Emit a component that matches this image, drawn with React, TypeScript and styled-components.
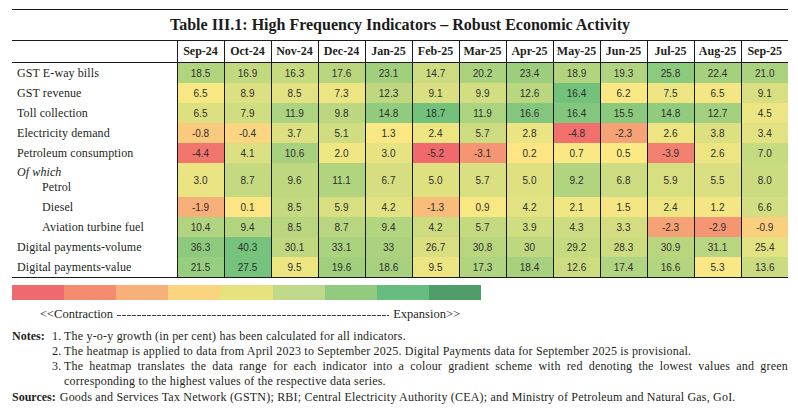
import React from 'react';
import styled, { createGlobalStyle } from 'styled-components';

const GlobalStyle = createGlobalStyle`
  html, body {
    margin: 0;
    padding: 0;
    background: #ffffff;
  }
  body {
    font-family: 'Liberation Serif', 'Times New Roman', serif;
    color: #231f20;
  }
`;

// Excel style red - yellow - green scale
const RED = [240, 105, 108];
const YELLOW = [252, 233, 131];
const GREEN = [99, 190, 123];

const heat = (t: number) => {
  const target = t < 0 ? RED : GREEN;
  const k = Math.min(1, Math.abs(t));
  const rgb = YELLOW.map((v, i) => Math.round(v + (target[i] - v) * k));
  return `rgb(${rgb.join(',')})`;
};

const Page = styled.div`
  width: 776px;
  padding: 9px 10px 0 12px;
`;

const TitleBar = styled.div`
  height: 30px;
  border-top: 1px solid #1a1a1a;
  display: flex;
  align-items: center;
  justify-content: center;
  font-size: 16px;
  font-weight: 700;
  color: #1a1a1a;
`;

const Table = styled.table`
  width: 776px;
  border-collapse: collapse;
  table-layout: fixed;
  border-bottom: 1px solid #1a1a1a;
`;

const HeadRow = styled.tr`
  border-top: 1px solid #1a1a1a;
  border-bottom: 1px solid #1a1a1a;
`;

const HeadCell = styled.th`
  height: 21px;
  padding: 0;
  font-size: 12px;
  font-weight: 700;
  color: #231f20;
  text-align: center;
  border-left: 1px solid #1a1a1a;
`;

const BlankHead = styled.th`
  padding: 0;
`;

const LabelCell = styled.td<{ $tall?: boolean }>`
  height: ${({ $tall }) => ($tall ? '34px' : '20px')};
  padding: 0 0 0 5px;
  font-size: 12px;
  letter-spacing: 0.1px;
  line-height: 15px;
  white-space: nowrap;
  vertical-align: middle;
`;

const Lead = styled.div`
  font-style: italic;
`;

const Indent = styled.div`
  padding-left: 25px;
`;

const ValueCell = styled.td<{ $t: number }>`
  padding: 0;
  text-align: center;
  vertical-align: middle;
  font-family: 'Liberation Sans', Arial, sans-serif;
  font-size: 10px;
  color: #2f2f2f;
  background: ${({ $t }) => heat($t)};
  border-left: 1px solid #1a1a1a;
`;

const Legend = styled.div`
  width: 469px;
  margin-top: 7px;
`;

const LegendBar = styled.div`
  display: grid;
  grid-template-columns: repeat(9, 1fr);
  height: 15px;
`;

const Swatch = styled.div<{ $color: string }>`
  background: ${({ $color }) => $color};
`;

const LegendText = styled.div`
  display: flex;
  align-items: center;
  gap: 4px;
  margin: 7px 0 8px;
  padding: 0 21px 0 28px;
  font-size: 12.5px;
  line-height: 14px;
  color: #231f20;
`;

const DashLine = styled.div`
  flex: 1;
  height: 1px;
  margin-top: 2px;
  background: repeating-linear-gradient(to right, #444 0 4px, transparent 4px 5px);
`;

const NoteBlock = styled.div`
  display: flex;
  font-size: 12px;
  letter-spacing: 0.2px;
  line-height: 15px;
  color: #231f20;
`;

const NoteHead = styled.div`
  width: 40px;
  font-weight: 700;
  letter-spacing: 0;
  flex-shrink: 0;
`;

const NoteList = styled.div`
  flex: 1;
`;

const NoteItem = styled.div`
  display: flex;
`;

const NoteNum = styled.span`
  width: 12px;
  flex-shrink: 0;
`;

const NoteText = styled.span`
  flex: 1;
  text-align: justify;
`;

const Sources = styled.div`
  margin-top: 1px;
  font-size: 12px;
  letter-spacing: 0.2px;
  line-height: 15px;
  color: #231f20;

  b {
    letter-spacing: 0;
    margin-right: 4px;
  }
`;

const months = [
  'Sep-24', 'Oct-24', 'Nov-24', 'Dec-24', 'Jan-25', 'Feb-25', 'Mar-25',
  'Apr-25', 'May-25', 'Jun-25', 'Jul-25', 'Aug-25', 'Sep-25',
];

interface Row {
  label: string;
  lead?: string;
  indent?: boolean;
  values: string[];
  heat: number[];
}

const rows: Row[] = [
  {
    label: 'GST E-way bills',
    values: ['18.5', '16.9', '16.3', '17.6', '23.1', '14.7', '20.2', '23.4', '18.9', '19.3', '25.8', '22.4', '21.0'],
    heat: [0.49, 0.37, 0.35, 0.44, 0.6, 0.3, 0.53, 0.62, 0.48, 0.5, 0.73, 0.57, 0.53],
  },
  {
    label: 'GST revenue',
    values: ['6.5', '8.9', '8.5', '7.3', '12.3', '9.1', '9.9', '12.6', '16.4', '6.2', '7.5', '6.5', '9.1'],
    heat: [0.03, 0.2, 0.17, 0.1, 0.4, 0.22, 0.27, 0.43, 0.9, 0.02, 0.1, 0.05, 0.24],
  },
  {
    label: 'Toll collection',
    values: ['6.5', '7.9', '11.9', '9.8', '14.8', '18.7', '11.9', '16.6', '16.4', '15.5', '14.8', '12.7', '4.5'],
    heat: [0.2, 0.28, 0.52, 0.42, 0.7, 0.9, 0.52, 0.8, 0.8, 0.74, 0.7, 0.58, 0.1],
  },
  {
    label: 'Electricity demand',
    values: ['-0.8', '-0.4', '3.7', '5.1', '1.3', '2.4', '5.7', '2.8', '-4.8', '-2.3', '2.6', '3.8', '3.4'],
    heat: [-0.25, -0.15, 0.2, 0.28, 0.02, 0.1, 0.3, 0.12, -0.95, -0.55, 0.1, 0.2, 0.17],
  },
  {
    label: 'Petroleum consumption',
    values: ['-4.4', '4.1', '10.6', '2.0', '3.0', '-5.2', '-3.1', '0.2', '0.7', '0.5', '-3.9', '2.6', '7.0'],
    heat: [-0.9, 0.2, 0.55, 0.08, 0.13, -1, -0.65, -0.03, 0.02, 0, -0.82, 0.1, 0.35],
  },
  {
    label: 'Petrol',
    lead: 'Of which',
    indent: true,
    values: ['3.0', '8.7', '9.6', '11.1', '6.7', '5.0', '5.7', '5.0', '9.2', '6.8', '5.9', '5.5', '8.0'],
    heat: [0.12, 0.36, 0.4, 0.48, 0.25, 0.19, 0.22, 0.19, 0.5, 0.3, 0.24, 0.22, 0.33],
  },
  {
    label: 'Diesel',
    indent: true,
    values: ['-1.9', '0.1', '8.5', '5.9', '4.2', '-1.3', '0.9', '4.2', '2.1', '1.5', '2.4', '1.2', '6.6'],
    heat: [-0.45, -0.02, 0.36, 0.24, 0.17, -0.35, 0.03, 0.17, 0.08, 0.06, 0.09, 0.05, 0.27],
  },
  {
    label: 'Aviation turbine fuel',
    indent: true,
    values: ['10.4', '9.4', '8.5', '8.7', '9.4', '4.2', '5.7', '3.9', '4.3', '3.3', '-2.3', '-2.9', '-0.9'],
    heat: [0.5, 0.47, 0.44, 0.45, 0.47, 0.3, 0.36, 0.28, 0.3, 0.26, -0.55, -0.65, -0.2],
  },
  {
    label: 'Digital payments-volume',
    values: ['36.3', '40.3', '30.1', '33.1', '33', '26.7', '30.8', '30', '29.2', '28.3', '30.9', '31.1', '25.4'],
    heat: [0.72, 0.88, 0.4, 0.53, 0.53, 0.23, 0.44, 0.4, 0.35, 0.3, 0.44, 0.45, 0.17],
  },
  {
    label: 'Digital payments-value',
    values: ['21.5', '27.5', '9.5', '19.6', '18.6', '9.5', '17.3', '18.4', '12.6', '17.4', '16.6', '5.3', '13.6'],
    heat: [0.66, 0.88, 0.1, 0.6, 0.55, 0.1, 0.5, 0.55, 0.3, 0.5, 0.47, 0.02, 0.33],
  },
];

const legendColors = [
  '#ef6a6e', '#f48d70', '#f8b07a', '#fad47f', '#e6e37f',
  '#bfd98a', '#93cb7e', '#66bd7f', '#4f9e69',
];

const notes = [
  'The y-o-y growth (in per cent) has been calculated for all indicators.',
  'The heatmap is applied to data from April 2023 to September 2025. Digital Payments data for September 2025 is provisional.',
  'The heatmap translates the data range for each indicator into a colour gradient scheme with red denoting the lowest values and green corresponding to the highest values of the respective data series.',
];

export default function App() {
  return (
    <>
      <GlobalStyle />
      <Page>
        <TitleBar>Table III.1: High Frequency Indicators – Robust Economic Activity</TitleBar>
        <Table>
          <colgroup>
            <col style={{ width: 165 }} />
            {months.map(m => (
              <col key={m} />
            ))}
          </colgroup>
          <thead>
            <HeadRow>
              <BlankHead />
              {months.map(m => (
                <HeadCell key={m}>{m}</HeadCell>
              ))}
            </HeadRow>
          </thead>
          <tbody>
            {rows.map(row => (
              <tr key={row.label}>
                <LabelCell $tall={!!row.lead}>
                  {row.lead && <Lead>{row.lead}</Lead>}
                  {row.indent ? <Indent>{row.label}</Indent> : row.label}
                </LabelCell>
                {row.values.map((v, i) => (
                  <ValueCell key={months[i]} $t={row.heat[i]}>
                    {v}
                  </ValueCell>
                ))}
              </tr>
            ))}
          </tbody>
        </Table>

        <Legend>
          <LegendBar>
            {legendColors.map(c => (
              <Swatch key={c} $color={c} />
            ))}
          </LegendBar>
          <LegendText>
            <span>&lt;&lt;Contraction</span>
            <DashLine />
            <span>Expansion&gt;&gt;</span>
          </LegendText>
        </Legend>

        <NoteBlock>
          <NoteHead>Notes:</NoteHead>
          <NoteList>
            {notes.map((n, i) => (
              <NoteItem key={i}>
                <NoteNum>{i + 1}.</NoteNum>
                <NoteText>{n}</NoteText>
              </NoteItem>
            ))}
          </NoteList>
        </NoteBlock>
        <Sources>
          <b>Sources:</b>
          Goods and Services Tax Network (GSTN); RBI; Central Electricity Authority (CEA); and Ministry of Petroleum and Natural Gas, GoI.
        </Sources>
      </Page>
    </>
  );
}
